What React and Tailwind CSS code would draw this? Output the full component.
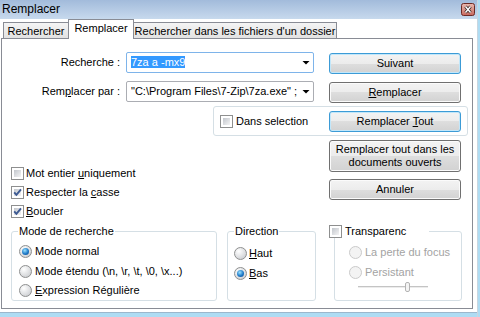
import React from 'react';

const Check = ({ checked }) => (
  <span className="relative flex h-[13px] w-[13px] shrink-0 border border-[#8e8f8f] bg-white p-[2px]">
    <span className="block h-full w-full bg-[linear-gradient(135deg,#c2c6cc,#f4f4f5)]" />
    {checked && (
      <svg className="absolute left-0 top-0" width="11" height="11" viewBox="0 0 11 11">
        <path d="M2.2 5.4 L4.4 7.9 L9 2.4" fill="none" stroke="#3d5a92" strokeWidth="1.9" />
      </svg>
    )}
  </span>
);

const Radio = ({ checked, disabled }) => (
  <span
    className={`flex h-[13px] w-[13px] shrink-0 items-center justify-center rounded-full border ${
      disabled
        ? 'border-[#cacaca] bg-[#f3f3f3]'
        : 'border-[#8e8f8f] bg-[radial-gradient(circle_at_35%_30%,#ffffff,#d2d4d7_75%)]'
    }`}
  >
    {checked && (
      <span className="h-[7px] w-[7px] rounded-full bg-[radial-gradient(circle_at_40%_35%,#9be2ff,#1e7ac8_55%,#0b4589)]" />
    )}
  </span>
);

const Btn = ({ children, focus, className = '' }) => (
  <div
    className={`flex w-[132px] shrink-0 items-center justify-center rounded-[3px] border text-center leading-[13px] bg-[linear-gradient(#f3f3f3,#ececec_50%,#dedede_50%,#d2d2d2)] ${
      focus ? 'border-[#3c9bd6] shadow-[inset_0_0_0_1px_#c2e7fa]' : 'border-[#707070] shadow-[inset_0_0_0_1px_#fbfbfb]'
    } ${className}`}
  >
    {children}
  </div>
);

const Combo = ({ children, focus }) => (
  <div
    className={`flex h-[21px] w-[188px] items-center rounded-[2px] border bg-white pl-[4px] ${
      focus ? 'border-[#7eb4ea]' : 'border-[#abadb3]'
    }`}
  >
    <div className="flex-1 overflow-hidden whitespace-nowrap leading-[13px]">{children}</div>
    <svg width="16" height="19" viewBox="0 0 16 19" className="shrink-0">
      <path d="M5.5 8 L12.5 8 L9 11.5 Z" fill="#000" />
    </svg>
  </div>
);

export default function App() {
  return (
    <div className="flex h-[317px] w-[480px] overflow-hidden bg-white text-[11px] text-black font-['Liberation_Sans',Arial,sans-serif]">
      <div className="flex w-[477px] flex-col">
        {/* title bar */}
        <div className="flex h-[19px] shrink-0 items-center bg-[linear-gradient(#a2bbdb,#c7d9ed)] pl-[2px]">
          <span className="text-[12px] leading-[19px]">Remplacer</span>
          <svg width="14" height="13" viewBox="0 0 14 13" className="ml-auto mr-[2px]">
            <defs>
              <linearGradient id="cg" x1="0" y1="0" x2="0" y2="1">
                <stop offset="0" stopColor="#ebb7ae" />
                <stop offset="0.5" stopColor="#d8948a" />
                <stop offset="1" stopColor="#c7665c" />
              </linearGradient>
            </defs>
            <rect x="0.5" y="0.5" width="13" height="12" rx="2" fill="url(#cg)" stroke="#6c2a25" />
            <path d="M4.5 3.5 L9.5 9.5 M9.5 3.5 L4.5 9.5" stroke="#3a2422" strokeWidth="3" />
            <path d="M4.5 3.5 L9.5 9.5 M9.5 3.5 L4.5 9.5" stroke="#fff" strokeWidth="1.4" />
          </svg>
        </div>

        <div className="flex-1 bg-white">
          {/* tabs */}
          <div className="flex h-[19px] items-end whitespace-nowrap pl-[3px]">
            <div className="h-[16px] w-[65px] border-l border-t border-[#898c95] bg-[linear-gradient(#f4f4f4,#e2e2e2)] pt-[2px] text-center leading-[13px]">
              Rechercher
            </div>
            <div className="relative z-10 -mb-[1px] h-[20px] w-[66px] border-x border-t border-[#898c95] bg-white pt-[2px] text-center leading-[13px]">
              Remplacer
            </div>
            <div className="h-[16px] w-[203px] border-r border-t border-[#898c95] bg-[linear-gradient(#f4f4f4,#e2e2e2)] pt-[2px] text-center leading-[13px]">
              Rechercher dans les fichiers d'un dossier
            </div>
          </div>

          {/* panel */}
          <div className="ml-[1px] h-[271px] w-[472px] border border-[#898c95]">
            <div className="mt-[13px] flex h-[22px] items-start">
              <div className="w-[118px] text-right leading-[21px]">Recherche :</div>
              <div className="ml-[6px]">
                <Combo focus>
                  <span className="bg-[#3399ff] text-white">7za a -mx9</span>
                </Combo>
              </div>
              <Btn focus className="ml-[15px] mt-[1px] h-[21px]">Suivant</Btn>
            </div>

            <div className="mt-[7px] flex h-[22px] items-start">
              <div className="w-[118px] text-right leading-[21px]">
                Rem<u>p</u>lacer par :
              </div>
              <div className="ml-[6px]">
                <Combo>"C:\Program Files\7-Zip\7za.exe" ; "C:\Program Files\7-Zip\7z.exe"</Combo>
              </div>
              <Btn className="ml-[15px] mt-[1px] h-[21px]">
                <span>
                  <u>R</u>emplacer
                </span>
              </Btn>
            </div>

            <div className="ml-[211px] mt-[3px] flex h-[30px] w-[255px] items-center rounded-[3px] border border-[#d5dfe5] pl-[6px]">
              <span className="flex w-[109px] items-center gap-[3px]">
                <Check />
                <span>Dans selection</span>
              </span>
              <Btn focus className="h-[21px]">
                <span>
                  Remplacer <u>T</u>out
                </span>
              </Btn>
            </div>

            <div className="mt-[4px] flex">
              <div className="flex w-[327px] flex-col pl-[9px] pt-[24px]">
                <div className="flex h-[19px] items-center gap-[2px]">
                  <Check />
                  <span>
                    Mot entier <u>u</u>niquement
                  </span>
                </div>
                <div className="flex h-[19px] items-center gap-[2px]">
                  <Check checked />
                  <span>
                    Respecter la <u>c</u>asse
                  </span>
                </div>
                <div className="flex h-[19px] items-center gap-[2px]">
                  <Check checked />
                  <span>
                    <u>B</u>oucler
                  </span>
                </div>
              </div>
              <div className="flex flex-col">
                <Btn className="h-[32px]">
                  Remplacer tout dans les
                  <br />
                  documents ouverts
                </Btn>
                <Btn className="mt-[7px] h-[21px]">Annuler</Btn>
              </div>
            </div>

            <div className="mt-[4px] flex items-start">
              <fieldset className="ml-[9px] h-[76px] w-[206px] rounded-[3px] border border-[#d5dfe5]">
                <legend className="ml-[6px] px-[1px] leading-[13px]">Mode de recherche</legend>
                <div className="pl-[7px] pt-[3px]">
                  <div className="flex h-[20px] items-center gap-[3px]">
                    <Radio checked />
                    <span>Mode normal</span>
                  </div>
                  <div className="flex h-[20px] items-center gap-[3px]">
                    <Radio />
                    <span>Mode étendu (\n, \r, \t, \0, \x...)</span>
                  </div>
                  <div className="flex h-[19px] items-center gap-[3px]">
                    <Radio />
                    <span>
                      <u>E</u>xpression Régulière
                    </span>
                  </div>
                </div>
              </fieldset>

              <fieldset className="ml-[10px] h-[76px] w-[89px] rounded-[3px] border border-[#d5dfe5]">
                <legend className="ml-[6px] px-[1px] leading-[13px]">Direction</legend>
                <div className="pl-[6px] pt-[5px]">
                  <div className="flex h-[20px] items-center gap-[2px]">
                    <Radio />
                    <span>
                      <u>H</u>aut
                    </span>
                  </div>
                  <div className="flex h-[20px] items-center gap-[2px]">
                    <Radio checked />
                    <span>
                      <u>B</u>as
                    </span>
                  </div>
                </div>
              </fieldset>

              <fieldset className="ml-[18px] h-[76px] w-[128px] rounded-[3px] border border-[#d5dfe5]">
                <legend className="-ml-[6px] w-[100px] leading-[13px]">
                  <span className="flex items-center gap-[3px]">
                    <Check />
                    <span>Transparenc</span>
                  </span>
                </legend>
                <div className="pl-[14px] pt-[4px] text-[#a3a3a3]">
                  <div className="flex h-[20px] items-center gap-[3px]">
                    <Radio disabled />
                    <span>La perte du focus</span>
                  </div>
                  <div className="flex h-[20px] items-center gap-[3px]">
                    <Radio disabled />
                    <span>Persistant</span>
                  </div>
                </div>
                <svg width="72" height="10" viewBox="0 0 72 10" className="ml-[22px] block">
                  <path d="M1 4.5 H71" stroke="#c4c4c4" strokeWidth="1" />
                  <path d="M1 5.5 H71" stroke="#ececec" strokeWidth="1" />
                  <rect x="48.5" y="0.5" width="4" height="9" rx="1.5" fill="#f4f4f4" stroke="#b3b3b3" />
                </svg>
              </fieldset>
            </div>
          </div>
        </div>

        <div className="h-[1px] shrink-0 bg-[#9bb7cc]" />
        <div className="h-[4px] shrink-0 bg-[#aedcf3]" />
      </div>
      <div className="w-[3px] border-l border-[#c9d6e0] bg-[#aedcf3]" />
    </div>
  );
}
